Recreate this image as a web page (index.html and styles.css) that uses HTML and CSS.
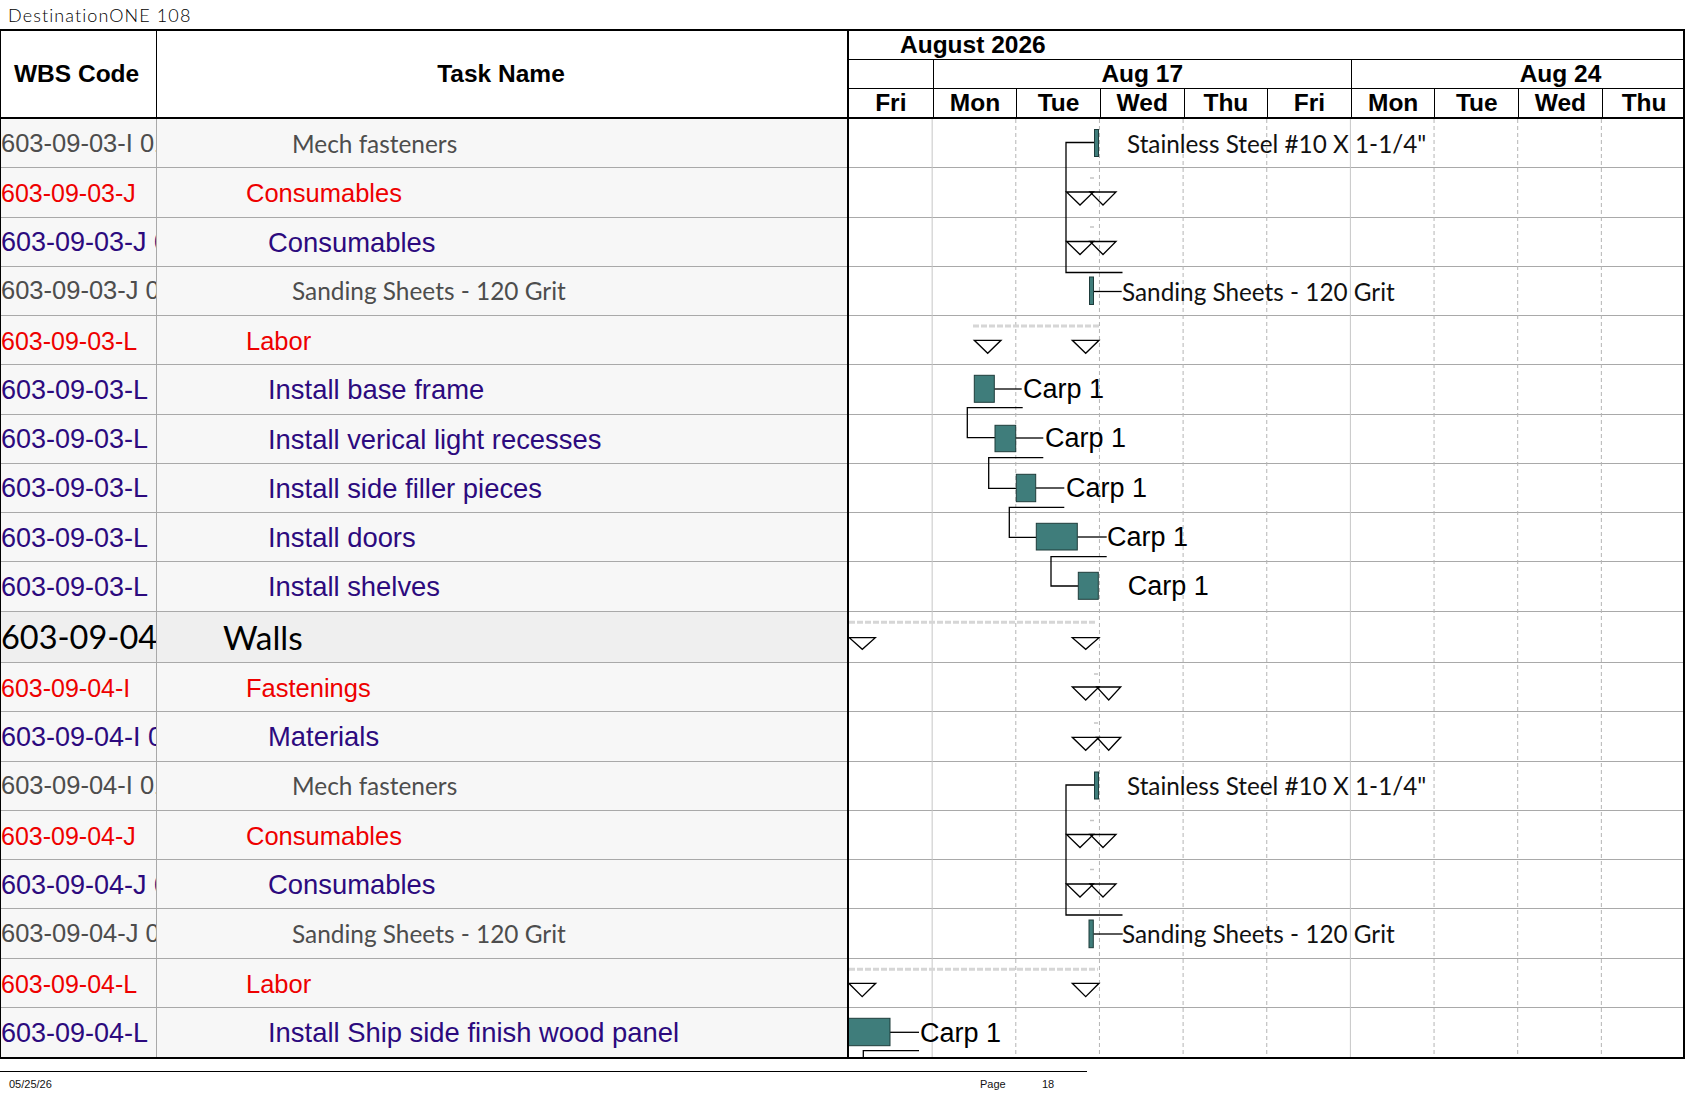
FILE: index.html
```html
<!DOCTYPE html>
<html>
<head>
<meta charset="utf-8">
<title>DestinationONE 108</title>
<link rel="stylesheet" href="styles.css">
</head>
<body>
<div class="title">DestinationONE 108</div>
<div class="report">
  <div class="left">
    <div class="lhead">
      <div class="lh-wbs">WBS Code</div>
      <div class="lh-task">Task Name</div>
    </div>
    <div class="row"><div class="wbs gray">603-09-03-I 01.01</div><div class="task l4">Mech fasteners</div></div>
    <div class="row"><div class="wbs red">603-09-03-J</div><div class="task l2">Consumables</div></div>
    <div class="row"><div class="wbs purple">603-09-03-J 01</div><div class="task l3">Consumables</div></div>
    <div class="row"><div class="wbs gray">603-09-03-J 01.01</div><div class="task l4">Sanding Sheets - 120 Grit</div></div>
    <div class="row"><div class="wbs red">603-09-03-L</div><div class="task l2">Labor</div></div>
    <div class="row"><div class="wbs purple">603-09-03-L</div><div class="task l3">Install base frame</div></div>
    <div class="row"><div class="wbs purple">603-09-03-L</div><div class="task l3">Install verical light recesses</div></div>
    <div class="row"><div class="wbs purple">603-09-03-L</div><div class="task l3">Install side filler pieces</div></div>
    <div class="row"><div class="wbs purple">603-09-03-L</div><div class="task l3">Install doors</div></div>
    <div class="row"><div class="wbs purple">603-09-03-L</div><div class="task l3">Install shelves</div></div>
    <div class="row walls"><div class="wbs top">603-09-04</div><div class="task l1">Walls</div></div>
    <div class="row"><div class="wbs red">603-09-04-I</div><div class="task l2">Fastenings</div></div>
    <div class="row"><div class="wbs purple">603-09-04-I 01</div><div class="task l3">Materials</div></div>
    <div class="row"><div class="wbs gray">603-09-04-I 01.01</div><div class="task l4">Mech fasteners</div></div>
    <div class="row"><div class="wbs red">603-09-04-J</div><div class="task l2">Consumables</div></div>
    <div class="row"><div class="wbs purple">603-09-04-J 01</div><div class="task l3">Consumables</div></div>
    <div class="row"><div class="wbs gray">603-09-04-J 01.01</div><div class="task l4">Sanding Sheets - 120 Grit</div></div>
    <div class="row"><div class="wbs red">603-09-04-L</div><div class="task l2">Labor</div></div>
    <div class="row"><div class="wbs purple">603-09-04-L</div><div class="task l3">Install Ship side finish wood panel</div></div>
  </div>
  <div class="gantt">
    <div class="ghead">
      <div class="gmonth">August 2026</div>
      <div class="gweeks">
        <div class="wk wk-first"></div>
        <div class="wk">Aug 17</div>
        <div class="wk">Aug 24</div>
      </div>
      <div class="gdays">
        <div class="day">Fri</div><div class="day">Mon</div><div class="day">Tue</div><div class="day">Wed</div><div class="day">Thu</div>
        <div class="day">Fri</div><div class="day">Mon</div><div class="day">Tue</div><div class="day">Wed</div><div class="day">Thu</div>
      </div>
    </div>
    <div class="gbody">
      <div class="grow"></div><div class="grow"></div><div class="grow"></div><div class="grow"></div><div class="grow"></div>
      <div class="grow"></div><div class="grow"></div><div class="grow"></div><div class="grow"></div><div class="grow"></div>
      <div class="grow walls"></div>
      <div class="grow"></div><div class="grow"></div><div class="grow"></div><div class="grow"></div>
      <div class="grow"></div><div class="grow"></div><div class="grow"></div><div class="grow"></div>
      <svg class="chart" width="834" height="938" viewBox="849 119 834 938" xmlns="http://www.w3.org/2000/svg">
        <g class="vgrid">
          <line class="vsolid" x1="932.15" y1="119" x2="932.15" y2="1057"/>
          <line class="vdash" x1="1015.8" y1="119" x2="1015.8" y2="1057"/>
          <line class="vdash" x1="1099.45" y1="119" x2="1099.45" y2="1057"/>
          <line class="vdash" x1="1183.1" y1="119" x2="1183.1" y2="1057"/>
          <line class="vdash" x1="1266.75" y1="119" x2="1266.75" y2="1057"/>
          <line class="vsolid" x1="1350.4" y1="119" x2="1350.4" y2="1057"/>
          <line class="vdash" x1="1434.05" y1="119" x2="1434.05" y2="1057"/>
          <line class="vdash" x1="1517.7" y1="119" x2="1517.7" y2="1057"/>
          <line class="vdash" x1="1601.35" y1="119" x2="1601.35" y2="1057"/>
        </g>

        <!-- row 0: Mech fasteners -->
        <polyline class="ln" points="1094.5,142.5 1066,142.5 1066,272.5 1122.5,272.5"/>
        <rect class="bar" x="1094.5" y="129.5" width="4" height="27"/>
        <text class="lbl" x="1127" y="143">Stainless Steel #10 X 1-1/4"</text>

        <!-- row 1 / 2: Consumables -->
        <line class="gdash" x1="1090" y1="178" x2="1094" y2="178"/>
        <polygon class="tri" points="1066.5,192 1093.5,192 1080,205"/>
        <polygon class="tri" points="1090,192 1116,192 1103,205"/>
        <line class="gdash" x1="1090" y1="227" x2="1094" y2="227"/>
        <polygon class="tri" points="1066.5,241.5 1093.5,241.5 1080,254.5"/>
        <polygon class="tri" points="1090,241.5 1116,241.5 1103,254.5"/>

        <!-- row 3: Sanding sheets -->
        <line class="ln" x1="1093.5" y1="291.5" x2="1121.7" y2="291.5"/>
        <rect class="bar" x="1089.5" y="277" width="4" height="27.5"/>
        <text class="lbl" x="1122" y="291">Sanding Sheets - 120 Grit</text>

        <!-- row 4: Labor -->
        <line class="sum" x1="973" y1="326" x2="1099" y2="326"/>
        <polygon class="tri" points="974.3,340.3 1001,340.3 987.7,353.3"/>
        <polygon class="tri" points="1072.3,340.3 1099,340.3 1085.7,353.3"/>

        <!-- rows 5-9: Carp tasks -->
        <line class="ln" x1="994.3" y1="389" x2="1021.7" y2="389"/>
        <rect class="bar" x="974.3" y="375.3" width="20" height="27"/>
        <text class="carp" x="1023" y="389">Carp 1</text>
        <polyline class="ln" points="1022.7,407.7 967.3,407.7 967.3,437.7 995,437.7"/>

        <line class="ln" x1="1015.7" y1="438" x2="1043.3" y2="438"/>
        <rect class="bar" x="995" y="425.3" width="20.7" height="26.4"/>
        <text class="carp" x="1045" y="438">Carp 1</text>
        <polyline class="ln" points="1043.3,457.7 988.7,457.7 988.7,488.3 1016.3,488.3"/>

        <line class="ln" x1="1035.7" y1="488" x2="1064.3" y2="488"/>
        <rect class="bar" x="1016.3" y="474.3" width="19.4" height="27.4"/>
        <text class="carp" x="1066" y="488">Carp 1</text>
        <polyline class="ln" points="1064.3,507.3 1009.3,507.3 1009.3,537.3 1036.3,537.3"/>

        <line class="ln" x1="1077.3" y1="537" x2="1106.7" y2="537"/>
        <rect class="bar" x="1036.3" y="523.3" width="41" height="26.7"/>
        <text class="carp" x="1107" y="537">Carp 1</text>
        <polyline class="ln" points="1106.7,556.7 1051,556.7 1051,586 1078.3,586"/>

        <rect class="bar" x="1078.3" y="572.3" width="20" height="27"/>
        <text class="carp" x="1127.7" y="586">Carp 1</text>

        <!-- row 10: Walls -->
        <line class="sum" x1="849" y1="622.3" x2="1096.7" y2="622.3"/>
        <polygon class="tri" points="849.3,637.7 875.3,637.7 862.3,649.3"/>
        <polygon class="tri" points="1072.3,637.7 1099,637.7 1085.7,649.3"/>

        <!-- row 11/12: Fastenings, Materials -->
        <line class="gdash" x1="1094" y1="674" x2="1098" y2="674"/>
        <polygon class="tri" points="1072.3,687 1099,687 1085.7,700"/>
        <polygon class="tri" points="1096.7,687 1120.7,687 1108.7,700"/>
        <line class="gdash" x1="1094" y1="723" x2="1098" y2="723"/>
        <polygon class="tri" points="1072.3,737.3 1099,737.3 1085.7,750.3"/>
        <polygon class="tri" points="1096.7,737.3 1120.7,737.3 1108.7,750.3"/>

        <!-- row 13: Mech fasteners -->
        <polyline class="ln" points="1094.5,785 1066,785 1066,915 1122.5,915"/>
        <rect class="bar" x="1094.5" y="772" width="4" height="27"/>
        <text class="lbl" x="1127" y="785.5">Stainless Steel #10 X 1-1/4"</text>

        <!-- row 14/15: Consumables -->
        <line class="gdash" x1="1090" y1="820.5" x2="1094" y2="820.5"/>
        <polygon class="tri" points="1066.5,834.5 1093.5,834.5 1080,847.5"/>
        <polygon class="tri" points="1090,834.5 1116,834.5 1103,847.5"/>
        <line class="gdash" x1="1090" y1="869.5" x2="1094" y2="869.5"/>
        <polygon class="tri" points="1066.5,884 1093.5,884 1080,897"/>
        <polygon class="tri" points="1090,884 1116,884 1103,897"/>

        <!-- row 16: Sanding -->
        <line class="ln" x1="1093.3" y1="934" x2="1122.7" y2="934"/>
        <rect class="bar" x="1089" y="920" width="4.3" height="27.7"/>
        <text class="lbl" x="1122" y="933.5">Sanding Sheets - 120 Grit</text>

        <!-- row 17: Labor -->
        <line class="sum" x1="849" y1="969.3" x2="1098" y2="969.3"/>
        <polygon class="tri" points="848.8,983.3 875.7,983.3 862.2,996.7"/>
        <polygon class="tri" points="1072.3,983.3 1099,983.3 1085.7,996.7"/>

        <!-- row 18 -->
        <line class="ln" x1="890" y1="1032.3" x2="919" y2="1032.3"/>
        <rect class="bar" x="848.5" y="1018.3" width="41.5" height="27.4"/>
        <text class="carp" x="920" y="1033">Carp 1</text>
        <polyline class="ln" points="919,1050.7 863.3,1050.7 863.3,1058"/>
      </svg>
    </div>
  </div>
</div>
<div class="footer">
  <div class="fline"></div>
  <div class="ftext"><span class="fdate">05/25/26</span><span class="fpage">Page</span><span class="fnum">18</span></div>
</div>
</body>
</html>
```

FILE: styles.css
```css
* { box-sizing: border-box; }

body {
  margin: 0;
  background: #ffffff;
  color: #000;
  font-family: "Liberation Sans", Arial, sans-serif;
}

.title {
  height: 29px;
  padding-left: 8px;
  display: flex;
  align-items: center;
  font-family: Lato, "Open Sans", sans-serif;
  font-weight: 300;
  font-size: 18px;
  letter-spacing: 1.1px;
  color: #000;
}

.report {
  display: flex;
  width: 1685px;
  border-top: 2px solid #000;
  border-bottom: 2px solid #000;
  border-left: 1px solid #000;
  border-right: 2px solid #000;
}

/* ---------- left table ---------- */
.left {
  width: 846px;
  flex: none;
}

.lhead {
  display: flex;
  height: 88px;
  border-bottom: 2px solid #000;
  font-weight: bold;
  font-size: 24.5px;
}

.lh-wbs {
  width: 156px;
  border-right: 1px solid #000;
  display: flex;
  align-items: center;
  padding-left: 13px;
}

.lh-task {
  flex: 1;
  display: flex;
  align-items: center;
  justify-content: center;
  padding-right: 2px;
}

.row {
  display: flex;
  height: 49.25px;
  border-bottom: 1px solid #a9a9a9;
  background: #f7f7f7;
}

.row:last-child { border-bottom: none; }

.row.walls {
  height: 51.5px;
  background: #efefef;
}

.wbs {
  width: 156px;
  flex: none;
  border-right: 1px solid #a9a9a9;
  display: flex;
  align-items: center;
  overflow: hidden;
  white-space: nowrap;
}

.task {
  flex: 1;
  display: flex;
  align-items: center;
  white-space: nowrap;
  overflow: hidden;
}

.wbs.gray { color: #4d4d4d; font-size: 25.5px; }
.wbs.red { color: #ee0000; font-size: 25px; padding-top: 3px; }
.wbs.purple { color: #2c0a7e; font-size: 27px; padding-top: 2px; }
.wbs.top {
  font-family: Lato, "Open Sans", sans-serif;
  font-size: 32.5px;
  color: #000;
}

.task.l1 {
  padding-left: 66px;
  font-family: Lato, "Open Sans", sans-serif;
  font-size: 33.5px;
  color: #000;
}
.task.l2 {
  padding-left: 89px;
  padding-top: 3px;
  font-size: 25.5px;
  color: #ee0000;
}
.task.l3 {
  padding-left: 111px;
  padding-top: 2px;
  font-size: 27.4px;
  color: #2c0a7e;
}
.task.l4 {
  padding-left: 135px;
  font-family: Lato, "Open Sans", sans-serif;
  font-size: 24.4px;
  color: #4d4d4d;
}

/* ---------- gantt ---------- */
.gantt {
  width: 834px;
  flex: none;
  border-left: 2px solid #000;
  box-sizing: content-box;
  overflow: hidden;
}

.ghead {
  height: 88px;
  border-bottom: 2px solid #000;
  font-weight: bold;
  font-size: 24.5px;
}

.gmonth {
  height: 29px;
  border-bottom: 1px solid #000;
  display: flex;
  align-items: center;
  padding-left: 51px;
}

.gweeks {
  height: 29px;
  border-bottom: 1px solid #000;
  display: flex;
  overflow: hidden;
}

.wk {
  width: 418.25px;
  flex: none;
  border-left: 1px solid #000;
  display: flex;
  align-items: center;
  justify-content: center;
}

.wk.wk-first {
  width: 83.65px;
  border-left: none;
}

.gdays {
  height: 28px;
  display: flex;
  overflow: hidden;
}

.day {
  width: 83.65px;
  flex: none;
  border-left: 1px solid #000;
  display: flex;
  align-items: center;
  justify-content: center;
}

.day:first-child { border-left: none; }

.gbody {
  position: relative;
  height: 938px;
}

.grow {
  height: 49.25px;
  border-bottom: 1px solid #a9a9a9;
  background: #ffffff;
}

.grow.walls { height: 51.5px; }
.grow:nth-last-child(2) { border-bottom: none; }

.chart {
  position: absolute;
  left: 0;
  top: 0;
  overflow: hidden;
}

.vsolid { stroke: #c6c6c6; stroke-width: 1; }
.vdash { stroke: #b4b4b4; stroke-width: 1; stroke-dasharray: 4 3; }

.ln { fill: none; stroke: #000; stroke-width: 1.3; }
.bar { fill: #3f7d7b; stroke: #1e3c3b; stroke-width: 1; }
.tri { fill: none; stroke: #000; stroke-width: 1.3; stroke-linejoin: miter; }
.sum { stroke: #d6d6d6; stroke-width: 3; stroke-dasharray: 6 2; }
.gdash { stroke: #c4c4c4; stroke-width: 1.5; }

.lbl {
  font-family: Lato, "Open Sans", sans-serif;
  font-size: 24.3px;
  fill: #111;
  dominant-baseline: central;
}

.carp {
  font-family: "Liberation Sans", Arial, sans-serif;
  font-size: 27px;
  fill: #000;
  dominant-baseline: central;
}

/* ---------- footer ---------- */
.footer {
  margin-top: 12px;
}

.fline {
  width: 1087px;
  border-top: 1px solid #000;
}

.ftext {
  display: flex;
  align-items: center;
  height: 24px;
  padding-left: 9px;
  font-size: 11px;
  color: #111;
}

.fdate { width: 971px; }
.fpage { width: 62px; }
```
